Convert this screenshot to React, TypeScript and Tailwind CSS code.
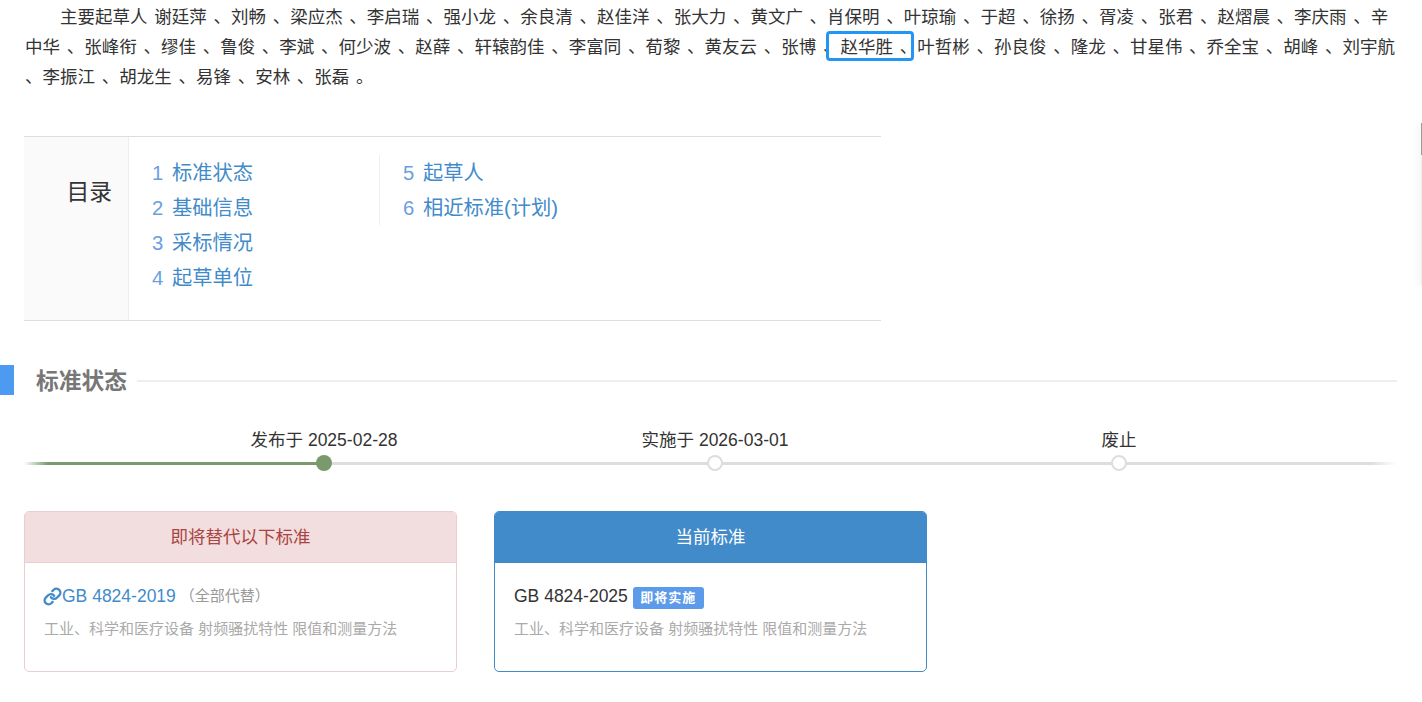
import React from 'react';
import { Link } from 'lucide-react';

const before = '谢廷萍 、刘畅 、梁应杰 、李启瑞 、强小龙 、余良清 、赵佳洋 、张大力 、黄文广 、肖保明 、叶琼瑜 、于超 、徐扬 、胥凌 、张君 、赵熠晨 、李庆雨 、辛中华 、张峰衔 、缪佳 、鲁俊 、李斌 、何少波 、赵薛 、轩辕韵佳 、李富同 、荀黎 、黄友云 、张博 、';
const after = '叶哲彬 、孙良俊 、隆龙 、甘星伟 、乔全宝 、胡峰 、刘宇航 、李振江 、胡龙生 、易锋 、安林 、张磊 。';

const col1 = ['标准状态', '基础信息', '采标情况', '起草单位'];
const col2 = ['起草人', '相近标准(计划)'];

const TocLink = ({ n, label }: { n: number; label: string }) => (
  <div className="flex h-[35px] items-center pt-[2px] text-[20.25px] text-[#428bca]">
    <span className="w-5 text-[#6a9fe0]">{n}</span>
    <span>{label}</span>
  </div>
);

const Card = ({ title, head, border, children }: { title: string; head: string; border: string; children: React.ReactNode }) => (
  <div className={`h-[161px] w-[433px] overflow-hidden rounded-[5px] border ${border}`}>
    <div className={`flex h-[51px] items-center justify-center border-b ${border} ${head}`}>{title}</div>
    <div className="pl-[19px] pt-[21px]">{children}</div>
  </div>
);

const Desc = () => <p className="mt-[9px] text-[15px] leading-[24px] text-[#aaaaaa]">工业、科学和医疗设备 射频骚扰特性 限值和测量方法</p>;

export default function App() {
  return (
    <div className="relative h-[702px] overflow-hidden bg-white text-[17.5px] text-[#333333] [font-family:'Liberation_Sans','Noto_Sans_CJK_SC',sans-serif]">
      {/* Paragraph */}
      <p className="ml-[25px] mr-[25px] pt-[2px] indent-[35px] leading-[30px] [word-spacing:1.85px]">
        主要起草人 {before}
        <span className="relative">
          赵华胜 、
          <span className="absolute left-[-15px] right-[3px] top-[-6px] h-[30px] rounded-[4px] border-[3px] border-[#2196f3]" />
        </span>
        {after}
      </p>

      {/* TOC */}
      <div className="ml-6 mt-[44px] flex h-[185px] w-[857px] border-y border-[#dddddd]">
        <div className="w-[105px] border-r border-[#eeeeee] bg-[#fafafa] pr-4 pt-[37px] text-right text-[22.75px] leading-[36px]">目录</div>
        <div className="flex items-start pt-[18px]">
          <div className="w-[250px] pl-[23px]">
            {col1.map((t, i) => <TocLink key={t} n={i + 1} label={t} />)}
          </div>
          <div className="border-l border-[#eeeeee] pl-[23px]">
            {col2.map((t, i) => <TocLink key={t} n={i + 5} label={t} />)}
          </div>
        </div>
      </div>

      {/* Section heading */}
      <div className="mr-[25px] mt-[44px] flex h-[30px] items-center">
        <div className="h-[30px] w-[14px] bg-[#4c9bf0]" />
        <h2 className="ml-[22px] mt-[3px] text-[22.75px] font-bold text-[#777777]">标准状态</h2>
        <div className="ml-[10px] mt-[1px] h-[2px] flex-1 bg-[#eeeeee]" />
      </div>

      {/* Timeline */}
      <div className="relative ml-6 mr-[25px] mt-[30px] h-[46px]">
        <div className="absolute bottom-[6px] left-0 right-0 h-[3px] bg-[linear-gradient(to_right,#ffffff,#dddddd_3%,#dddddd_98%,#ffffff)]" />
        <div className="absolute bottom-[6px] left-0 h-[3px] w-[300px] bg-[linear-gradient(to_right,#ffffff,#7a9a6e_8%)]" />
        <div className="relative flex">
          <Step label="发布于 2025-02-28" offset="ml-[200px]" done />
          <Step label="实施于 2026-03-01" offset="ml-[191px]" />
          <Step label="废止" offset="ml-[204px]" />
        </div>
      </div>

      {/* Cards */}
      <div className="ml-6 mt-[40px] flex gap-[37px]">
        <Card title="即将替代以下标准" head="bg-[#f2dede] text-[#a94442]" border="border-[#ebccd1]">
          <div className="flex h-[24px] items-center text-[#428bca]">
            <Link className="-ml-[1px] h-[19px] w-[19px] shrink-0" strokeWidth={3} />
            <span>GB 4824-2019</span>
            <span className="ml-[4px] text-[15px] text-[#999999]">（全部代替）</span>
          </div>
          <Desc />
        </Card>
        <Card title="当前标准" head="bg-[#428bca] text-white" border="border-[#428bca]">
          <div className="flex h-[24px] items-center">
            <span>GB 4824-2025</span>
            <span className="ml-[5px] mt-[3px] flex h-[22px] w-[71px] items-center justify-center rounded-[3px] bg-[#5b9bea] text-[13px] font-bold tracking-[1px] text-white">即将实施</span>
          </div>
          <Desc />
        </Card>
      </div>

      {/* Edge of the side panel */}
      <div className="absolute right-0 top-[123px] h-[163px] w-px bg-[#eeeeee] shadow-[-2px_0_6px_rgba(0,0,0,0.2)]">
        <div className="h-[32px] bg-[#999999]" />
      </div>
    </div>
  );
}

function Step({ label, offset, done }: { label: string; offset: string; done?: boolean }) {
  return (
    <div className={`flex w-[200px] flex-col items-center ${offset}`}>
      <div className="h-[30px] whitespace-nowrap leading-[30px]">{label}</div>
      <div className={done ? 'h-4 w-4 rounded-full bg-[#7a9a6e]' : 'h-4 w-4 rounded-full border-2 border-[#dddddd] bg-white'} />
    </div>
  );
}
